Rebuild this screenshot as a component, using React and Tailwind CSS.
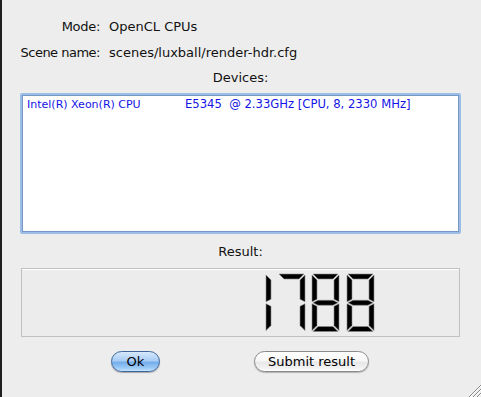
import React from "react";

const T = 5;
const G = 1;

function segs(x0, w, y0, h, list) {
  const xL = x0, xR = x0 + w, yT = y0, yB = y0 + h, yM = y0 + h / 2;
  const t = T, g = G;
  const map = {
    a: [[xL + g, yT], [xR - g, yT], [xR - g - t, yT + t], [xL + g + t, yT + t]],
    b: [[xR, yT + g], [xR, yM - g], [xR - t, yM - g - t / 2], [xR - t, yT + g + t]],
    c: [[xR, yM + g], [xR, yB - g], [xR - t, yB - g - t], [xR - t, yM + g + t / 2]],
    d: [[xL + g, yB], [xR - g, yB], [xR - g - t, yB - t], [xL + g + t, yB - t]],
    e: [[xL, yM + g], [xL, yB - g], [xL + t, yB - g - t], [xL + t, yM + g + t / 2]],
    f: [[xL, yT + g], [xL, yM - g], [xL + t, yM - g - t / 2], [xL + t, yT + g + t]],
    g: [[xL + g, yM], [xL + g + t, yM - t / 2], [xR - g - t, yM - t / 2], [xR - g, yM], [xR - g - t, yM + t / 2], [xL + g + t, yM + t / 2]],
  };
  return list.split("").map((k) => (
    <polygon
      key={x0 + k}
      points={map[k].map((p) => p.join(",")).join(" ")}
      fill="#000"
      stroke="#8c8c8c"
      strokeWidth="0.6"
    />
  ));
}

export default function App() {
  const font = { fontFamily: '"DejaVu Sans", Verdana, sans-serif' };
  return (
    <div
      className="relative w-[481px] h-[397px] bg-[#ededed] border-l-2 border-[#1f1f1f] pl-[18px] pr-[20px] pt-[18px] text-[13px] text-[#111] overflow-hidden"
      style={font}
    >
      <div className="grid grid-cols-[80px_1fr] gap-x-[9px] gap-y-[9px] leading-[17px]">
        <div className="text-right tracking-[-0.3px]">Mode:</div>
        <div>OpenCL CPUs</div>
        <div className="text-right tracking-[-0.5px] whitespace-nowrap">Scene name:</div>
        <div>scenes/luxball/render-hdr.cfg</div>
      </div>
      <div className="mt-[8px] text-center leading-[17px]">Devices:</div>
      <div className="mt-[7px] h-[141px] p-[2px] bg-[#9bbde6] rounded-[2px]">
        <div className="h-full bg-white border border-[#7797c4] pl-[4px] pt-[1px]">
          <div className="flex items-baseline leading-[14px] text-[#1414e6] whitespace-pre">
            <span className="text-[11px] w-[158px]">Intel(R) Xeon(R) CPU</span>
            <span className="text-[11.6px]">{"E5345  @ 2.33GHz [CPU, 8, 2330 MHz]"}</span>
          </div>
        </div>
      </div>
      <div className="mt-[9px] text-center leading-[17px]">Result:</div>
      <div className="mt-[8px] mx-[1px] h-[69px] border border-[#c0c0c0] bg-[#ececec] shadow-[inset_0_1px_0_#ffffff]">
        <svg width="437" height="67" viewBox="22 269 437 67" className="block">
          {segs(266, 27, 274, 57.5, "ef")}
          {segs(278, 27, 274, 57.5, "abc")}
          {segs(312, 27, 274, 57.5, "abcdefg")}
          {segs(347, 27, 274, 57.5, "abcdefg")}
        </svg>
      </div>
      <div className="mt-[14px] flex items-start pl-[91px] gap-[94px]">
        <button className="w-[49px] h-[21px] rounded-full border border-[#3f669c] bg-[linear-gradient(to_bottom,#d7e9fc_0%,#a9cdf5_45%,#75aeec_55%,#9ccbf7_85%,#c8e4fd_100%)] shadow-[0_1px_1px_rgba(0,0,0,0.3)] text-[13px] leading-[19px] text-black">
          Ok
        </button>
        <button className="w-[115px] h-[21px] rounded-full border border-[#8a8a8a] bg-[linear-gradient(to_bottom,#ffffff_0%,#f7f7f7_45%,#e8e8e8_55%,#f2f2f2_85%,#ffffff_100%)] shadow-[0_1px_1px_rgba(0,0,0,0.25)] text-[13px] leading-[19px] text-black">
          Submit result
        </button>
      </div>
      <svg className="absolute right-0 bottom-0" width="13" height="13" viewBox="0 0 13 13">
        <line x1="13" y1="1" x2="1" y2="13" stroke="#8a8a8a" strokeWidth="1" />
        <line x1="13" y1="2" x2="2" y2="13" stroke="#ffffff" strokeWidth="1" />
        <line x1="13" y1="5" x2="5" y2="13" stroke="#8a8a8a" strokeWidth="1" />
        <line x1="13" y1="6" x2="6" y2="13" stroke="#ffffff" strokeWidth="1" />
        <line x1="13" y1="9" x2="9" y2="13" stroke="#8a8a8a" strokeWidth="1" />
        <line x1="13" y1="10" x2="10" y2="13" stroke="#ffffff" strokeWidth="1" />
      </svg>
    </div>
  );
}
